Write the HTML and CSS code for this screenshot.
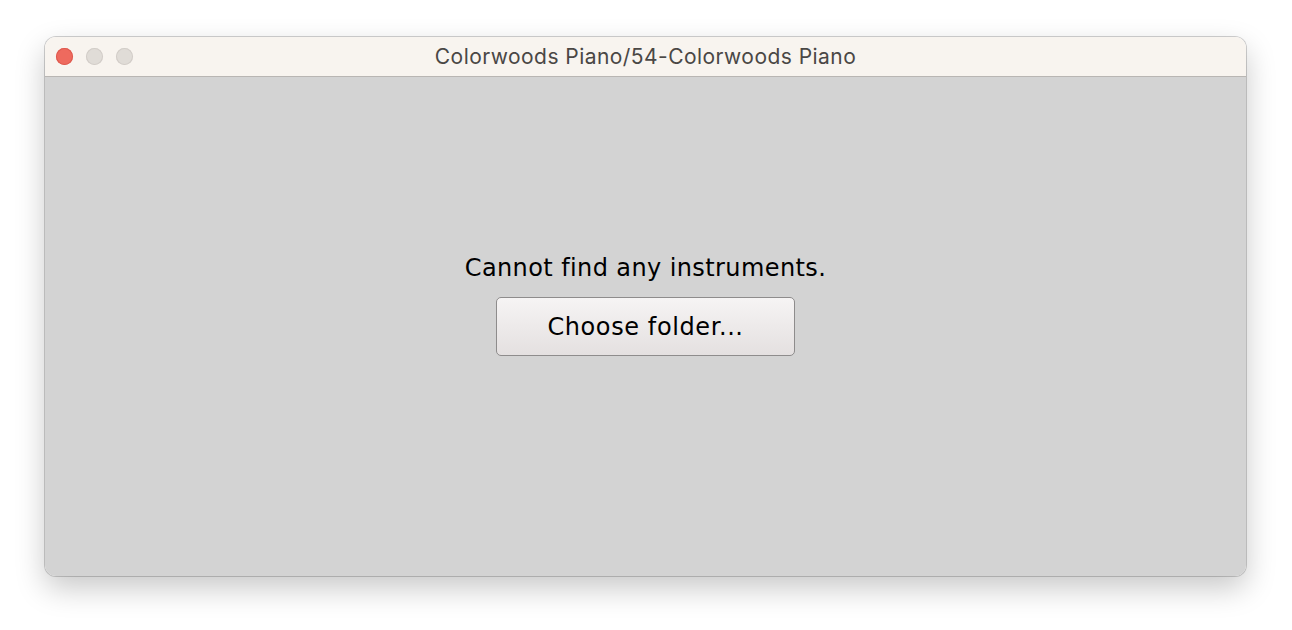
FILE: index.html
```html
<!DOCTYPE html>
<html>
<head>
<meta charset="utf-8">
<link rel="stylesheet" href="styles.css">
</head>
<body>
<div class="window">
  <div class="titlebar">
    <div class="lights">
      <span class="light close"></span>
      <span class="light"></span>
      <span class="light"></span>
    </div>
    <div class="title">Colorwoods Piano/54-Colorwoods Piano</div>
  </div>
  <div class="content">
    <div class="message">Cannot find any instruments.</div>
    <button class="btn">Choose folder...</button>
  </div>
</div>
</body>
</html>
```

FILE: styles.css
```css
html, body {
  margin: 0;
  padding: 0;
  background: #ffffff;
}
body {
  padding: 37px 0 0 45px;
  width: 1292px;
  height: 630px;
  box-sizing: border-box;
  overflow: hidden;
}
.window {
  width: 1201px;
  height: 539px;
  border-radius: 11px;
  overflow: hidden;
  box-shadow: 0 0 0 1px rgba(0,0,0,0.18), 0 12px 30px rgba(0,0,0,0.22);
  display: flex;
  flex-direction: column;
}
.titlebar {
  height: 39px;
  background: #f8f4ef;
  border-bottom: 1px solid #b9b6b3;
  position: relative;
  display: flex;
  align-items: center;
  justify-content: center;
  flex: none;
}
.lights {
  position: absolute;
  left: 11px;
  top: 11px;
  display: flex;
  gap: 13px;
}
.light {
  width: 17px;
  height: 17px;
  border-radius: 50%;
  background: #e0dcd7;
  box-shadow: inset 0 0 0 1px #d2cdc8;
}
.light.close {
  background: #ee6a5e;
  box-shadow: inset 0 0 0 1px #de5a4f;
}
.title {
  font-family: Inter, "Noto Sans", sans-serif;
  font-size: 21px;
  color: #4a4745;
  letter-spacing: 0.45px;
}
.content {
  flex: 1;
  background: #d3d3d3;
  display: flex;
  flex-direction: column;
  align-items: center;
  padding-top: 177px;
}
.message {
  font-family: "DejaVu Sans", sans-serif;
  font-size: 24px;
  color: #000;
  line-height: 28px;
  letter-spacing: 0.4px;
}
.btn {
  margin-top: 15px;
  width: 299px;
  height: 59px;
  border: 1px solid #8e8c8c;
  border-radius: 5px;
  background: linear-gradient(#f6f4f4, #e4e0e0);
  font-family: "DejaVu Sans", sans-serif;
  font-size: 24px;
  letter-spacing: 0.6px;
  color: #000;
  padding: 0;
}
```
